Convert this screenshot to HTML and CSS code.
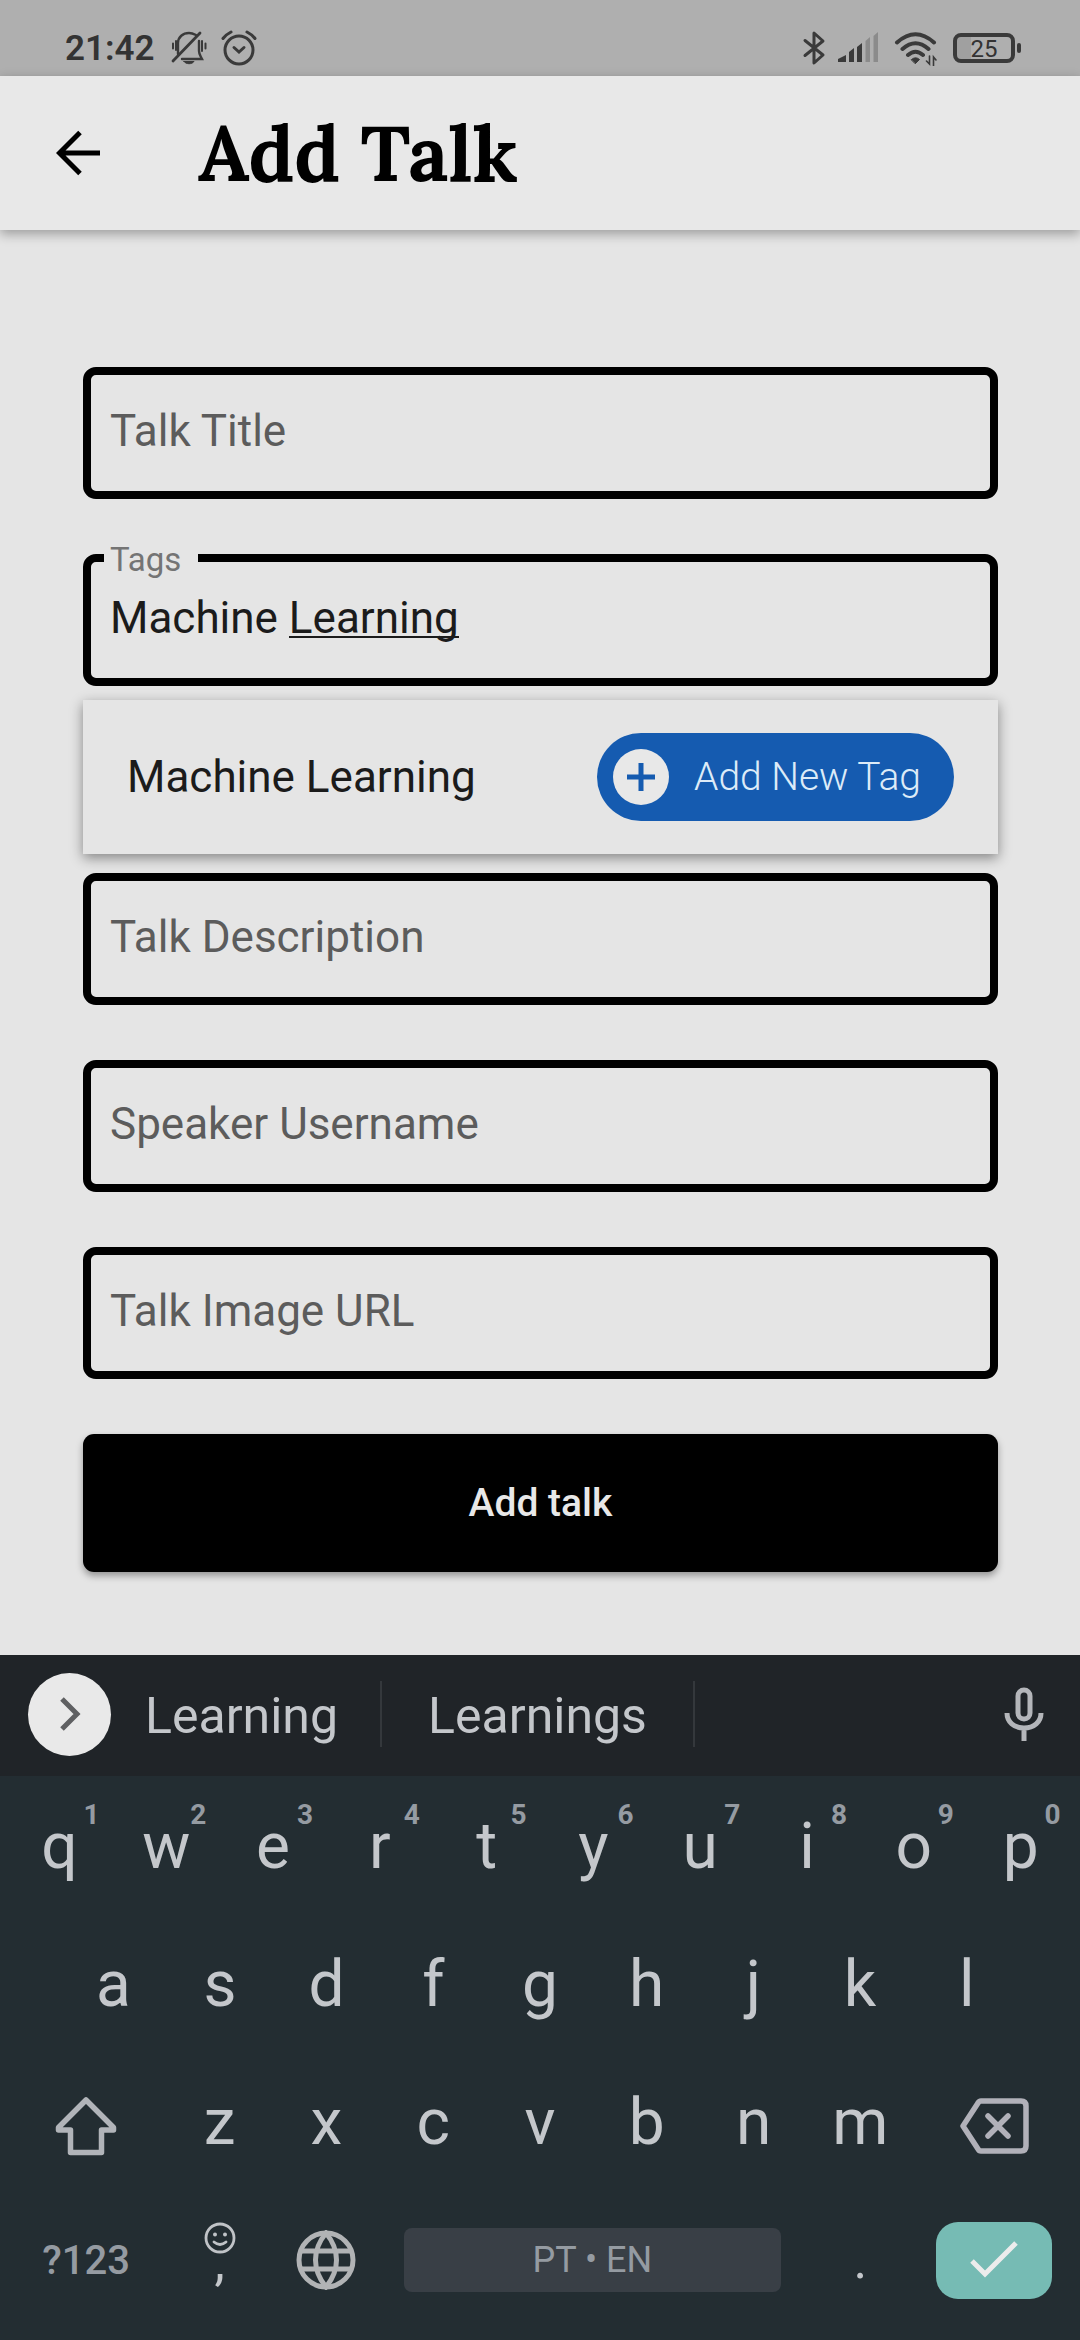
FILE: index.html
```html
<!DOCTYPE html>
<html lang="en">
<head>
<meta charset="utf-8">
<meta name="viewport" content="width=device-width, initial-scale=1">
<title>Add Talk</title>
<link rel="stylesheet" href="styles.css">
</head>
<body>
<div class="status">
  <div class="status-group status-left">
    <span class="clock">21:42</span>
    <svg class="icon" width="36" height="36" viewBox="0 0 36 36" fill="none" stroke="#3a3a3a" stroke-width="2.4" stroke-linecap="round">
      <path d="M7 24V13c0-6 5-10 11-10 3 0 5 1 7 2M28 11v10c0 3 1 4 3 8H11"/>
      <path d="M2 31L29 3" stroke-width="2.8"/>
      <path d="M13 31.500h10c-2 3-8 3-10 0z" fill="#3a3a3a" stroke-width="1"/>
      <path d="M2 13.500v5M5 11v9M31 11v10M34.500 13.500v5" stroke-width="2"/>
    </svg>
    <svg class="icon alarm" width="36" height="36" viewBox="0 0 36 36" fill="none" stroke="#3a3a3a" stroke-width="3" stroke-linecap="round">
      <circle cx="18" cy="20" r="14"/>
      <path d="M13 17.500l5 4.500 5-4.500"/>
      <path d="M2 8.500q3-4 8-6.500M26 2q5 2.500 8 6.500"/>
    </svg>
  </div>
  <div class="status-group status-right">
    <svg class="icon" width="24" height="36" viewBox="0 0 24 36" fill="none" stroke="#3a3a3a" stroke-width="3" stroke-linejoin="round" stroke-linecap="round">
      <path d="M3 10.500L21 25l-9 8V3l9 8L3 25.500"/>
    </svg>
    <svg class="icon signal" width="42" height="36" viewBox="0 0 42 36" fill="#3a3a3a">
      <path d="M1 32v-3l8-4v7zM12 32V22l5-4v14zM20 32V17l5-4v19z"/>
      <path d="M28.500 32V11l4.500-4v25zM36.500 32V6l4.500-4v30z" fill="#8b8b8b"/>
    </svg>
    <svg class="icon wifi" width="44" height="36" viewBox="0 0 44 36" fill="none" stroke="#3a3a3a" stroke-width="4" stroke-linecap="round">
      <path d="M3 12.500Q21.500-4 40 12.500M8.500 19Q21.500 7.500 34.500 19M14 25Q21.500 18.500 29 25"/>
      <path d="M17.500 29.500q4-3.500 8 0l-4 4z" fill="#3a3a3a" stroke-width="1"/>
      <path d="M35.500 26v8l-3-3M39.500 36v-9l2.500 3" stroke-width="1.600"/>
    </svg>
    <span class="battery"><span class="battery-body">25</span><span class="battery-nub"></span></span>
  </div>
</div>

<header class="appbar">
  <button class="back" type="button" aria-label="Back">
    <svg width="44" height="46" viewBox="0 0 44 46" fill="none" stroke="#000" stroke-width="5">
      <path d="M44 23H4M24 2.500L3.500 23 24 43.500"/>
    </svg>
  </button>
  <h1 class="title">Add Talk</h1>
</header>

<main class="content">
  <form class="form">
    <div class="field">
      <label class="field-label" for="talk-title">Talk Title</label>
      <input class="field-input" id="talk-title" type="text">
    </div>

    <div class="tag-group">
      <div class="field">
        <label class="field-label field-label-raised" for="tags">Tags</label>
        <input class="field-input" id="tags" type="text" value="Machine Learning">
        <span class="composing"></span>
      </div>
      <div class="menu">
        <span class="menu-text">Machine Learning</span>
        <button class="pill" type="button">
          <svg width="56" height="56" viewBox="0 0 56 56">
            <circle cx="28" cy="28" r="28" fill="#e8e8e8"/>
            <path d="M28 14v28M14 28h28" stroke="#155bb0" stroke-width="5"/>
          </svg>
          <span>Add New Tag</span>
        </button>
      </div>
      <div class="field">
        <label class="field-label" for="talk-description">Talk Description</label>
        <input class="field-input" id="talk-description" type="text">
      </div>
    </div>

    <div class="field">
      <label class="field-label" for="speaker">Speaker Username</label>
      <input class="field-input" id="speaker" type="text">
    </div>
    <div class="field">
      <label class="field-label" for="image-url">Talk Image URL</label>
      <input class="field-input" id="image-url" type="text">
    </div>
    <button class="submit" type="button">Add talk</button>
  </form>
</main>

<section class="keyboard">
  <div class="suggestions">
    <button class="expand" type="button" aria-label="More">
      <svg width="24" height="36" viewBox="0 0 24 36" fill="none" stroke="#5f6062" stroke-width="5"><path d="M4 3l15 15L4 33"/></svg>
    </button>
    <button class="suggestion" type="button">Learning</button>
    <button class="suggestion suggestion-wide" type="button">Learnings</button>
    <button class="mic" type="button" aria-label="Voice input">
      <svg width="40" height="54" viewBox="0 0 40 54" fill="none" stroke="#b4b6ba" stroke-width="5">
        <rect x="14" y="3" width="12" height="29" rx="6"/>
        <path d="M3 26c0 9 7 15 17 15s17-6 17-15M20 41v13"/>
      </svg>
    </button>
  </div>

  <div class="keys">
    <div class="row row-top">
      <button class="key" type="button">q<span class="hint">1</span></button>
      <button class="key" type="button">w<span class="hint">2</span></button>
      <button class="key" type="button">e<span class="hint">3</span></button>
      <button class="key" type="button">r<span class="hint">4</span></button>
      <button class="key" type="button">t<span class="hint">5</span></button>
      <button class="key" type="button">y<span class="hint">6</span></button>
      <button class="key" type="button">u<span class="hint">7</span></button>
      <button class="key" type="button">i<span class="hint">8</span></button>
      <button class="key" type="button">o<span class="hint">9</span></button>
      <button class="key" type="button">p<span class="hint">0</span></button>
    </div>
    <div class="row row-home">
      <button class="key" type="button">a</button>
      <button class="key" type="button">s</button>
      <button class="key" type="button">d</button>
      <button class="key" type="button">f</button>
      <button class="key" type="button">g</button>
      <button class="key" type="button">h</button>
      <button class="key" type="button">j</button>
      <button class="key" type="button">k</button>
      <button class="key" type="button">l</button>
    </div>
    <div class="row row-lower">
      <button class="key key-icon" type="button" aria-label="Shift">
        <svg width="62" height="60" viewBox="0 0 62 60" fill="none" stroke="#b1b4b9" stroke-width="5.500" stroke-linejoin="round">
          <path d="M31 4L3.500 31.500V34H15.500V56.500H46.500V34H58.500V31.500z"/>
        </svg>
      </button>
      <button class="key" type="button">z</button>
      <button class="key" type="button">x</button>
      <button class="key" type="button">c</button>
      <button class="key" type="button">v</button>
      <button class="key" type="button">b</button>
      <button class="key" type="button">n</button>
      <button class="key" type="button">m</button>
      <button class="key key-icon" type="button" aria-label="Backspace">
        <svg width="70" height="56" viewBox="0 0 70 56" fill="none" stroke="#b1b1b9" stroke-width="5.500" stroke-linecap="round" stroke-linejoin="round">
          <path d="M22 3H62q5 0 5 5V48q0 5-5 5H22q-2 0-3-2L4 28 19 5q1-2 3-2z"/>
          <path d="M29 18L49 38M49 18L29 38"/>
        </svg>
      </button>
    </div>
    <div class="row row-bottom">
      <button class="key key-symbols" type="button">?123</button>
      <button class="key key-comma" type="button">
        <svg width="32" height="32" viewBox="0 0 32 32" fill="none" stroke="#c0c3c7" stroke-width="2.800" stroke-linecap="round">
          <circle cx="16" cy="16" r="14"/>
          <path d="M10 20q6 5 12 0"/>
          <circle cx="11" cy="12.500" r="2" fill="#c0c3c7" stroke="none"/>
          <circle cx="21" cy="12.500" r="2" fill="#c0c3c7" stroke="none"/>
        </svg>
        <span class="comma">,</span>
      </button>
      <button class="key" type="button" aria-label="Language">
        <svg width="60" height="60" viewBox="0 0 60 60" fill="none" stroke="#b1b3b5" stroke-width="5">
          <circle cx="30" cy="30" r="27"/>
          <path d="M30 3C16 20 16 40 30 57C44 40 44 20 30 3zM5 21h50M5 39h50"/>
        </svg>
      </button>
      <button class="key key-space" type="button"><span class="space-bar">PT • EN</span></button>
      <button class="key key-period" type="button">.</button>
      <button class="key key-enter" type="button" aria-label="Done">
        <span class="enter-face">
          <svg width="50" height="40" viewBox="0 0 50 40" fill="none" stroke="#ececec" stroke-width="5"><path d="M3 21l13 13L47 3"/></svg>
        </span>
      </button>
    </div>
  </div>
</section>
</body>
</html>
```

FILE: styles.css
```css
* {
  box-sizing: border-box;
}

body {
  margin: 0;
  min-height: 100vh;
  display: flex;
  flex-direction: column;
  background: #e5e5e5;
  color: #1b1b1b;
  font-family: Roboto, "Liberation Sans", sans-serif;
  font-size: 44px;
}

button,
input {
  margin: 0;
  padding: 0;
  border: 0;
  background: none;
  color: inherit;
  font: inherit;
}

svg {
  display: block;
  flex: none;
}

/* Status bar */
.status {
  display: flex;
  justify-content: space-between;
  height: 76px;
  padding: 20px 59px 0 65px;
  background: #afafaf;
  color: #333;
}

.status-group {
  display: flex;
  align-items: center;
}

.clock {
  font-size: 35px;
  font-weight: 600;
  margin-right: 16px;
}

.alarm {
  margin-left: 14px;
}

.signal {
  margin-left: 11px;
}

.wifi {
  margin-left: 15px;
}

.battery {
  display: flex;
  align-items: center;
  gap: 2px;
  margin-left: 15px;
}

.battery-body {
  width: 62px;
  height: 30px;
  border: 4px solid #3a3a3a;
  border-radius: 8px;
  background: linear-gradient(90deg, #a0a0a0 14px, transparent 14px);
  font-size: 24px;
  line-height: 24px;
  text-align: center;
}

.battery-nub {
  width: 4px;
  height: 10px;
  border-radius: 2px;
  background: #3a3a3a;
}

/* App bar */
.appbar {
  display: flex;
  align-items: center;
  height: 154px;
  padding: 0 56px;
  background: #e8e8e8;
  box-shadow: 0 4px 11px rgba(0, 0, 0, 0.32);
}

.title {
  margin: 0 0 0 98px;
  font-family: Lora, "Liberation Serif", serif;
  font-size: 77px;
  font-weight: 700;
  line-height: 96px;
  color: #000;
}

/* Form */
.content {
  flex: 1;
  padding: 137px 82px 83px 83px;
}

.form {
  display: flex;
  flex-direction: column;
  gap: 55px;
}

.tag-group {
  display: flex;
  flex-direction: column;
}

.field {
  position: relative;
  display: grid;
  height: 132px;
  border: 8px solid #000;
  border-radius: 13px;
}

.field-label,
.field-input {
  grid-area: 1 / 1;
  min-width: 0;
  padding: 0 19px 4px;
}

.field-label {
  align-self: center;
  color: #5c5c5c;
}

.field-input {
  width: 100%;
  outline: none;
}

.field-label-raised {
  position: absolute;
  top: -22px;
  left: 13px;
  padding: 0 17px 0 6px;
  background: #e5e5e5;
  color: #747474;
  font-size: 33px;
  line-height: 40px;
}

.composing {
  position: absolute;
  top: 74px;
  left: 198px;
  width: 170px;
  height: 2px;
  background: #1b1b1b;
}

.menu {
  display: flex;
  align-items: center;
  justify-content: space-between;
  height: 154px;
  margin: 14px 0 19px;
  padding: 0 44px;
  background: #e5e5e5;
  box-shadow: 0 4px 12px rgba(0, 0, 0, 0.42);
}

.pill {
  display: flex;
  align-items: center;
  gap: 25px;
  height: 88px;
  padding: 0 33px 0 16px;
  border-radius: 44px;
  background: #155bb0;
  color: #dcebf8;
  font-size: 39px;
  font-weight: 300;
}

.submit {
  height: 138px;
  border-radius: 11px;
  background: #000;
  color: #e8e8e8;
  font-size: 39px;
  font-weight: 500;
  box-shadow: 0 4px 7px rgba(0, 0, 0, 0.35);
}

/* Keyboard */
.keyboard {
  padding-bottom: 11px;
  background: #232d32;
  color: #c4c7cb;
}

.suggestions {
  display: flex;
  align-items: center;
  height: 121px;
  padding: 0 36px 3px 28px;
  background: #202428;
}

.expand {
  display: grid;
  place-items: center;
  width: 83px;
  height: 83px;
  border-radius: 50%;
  background: #e9e9e9;
}

.suggestion {
  height: 66px;
  padding: 4px 42px 0 34px;
  border-right: 2px solid #34383c;
  font-size: 50px;
  line-height: 62px;
}

.suggestion-wide {
  padding: 4px 46px;
}

.mic {
  margin-left: auto;
}

.keys {
  display: grid;
  grid-auto-rows: 138px;
  padding-top: 1px;
}

.row {
  display: grid;
  padding: 0 6px;
}

.row-top {
  grid-template-columns: repeat(10, 1fr);
}

.row-home {
  grid-template-columns: repeat(9, 1fr);
  padding: 0 60px;
}

.row-lower {
  grid-template-columns: 3fr repeat(7, 2fr) 3fr;
}

.row-bottom {
  grid-template-columns: 3fr 2fr 2fr 8fr 2fr 3fr;
}

.key {
  position: relative;
  display: flex;
  align-items: center;
  justify-content: center;
  min-width: 0;
  font-size: 64px;
}

.hint {
  position: absolute;
  top: 24px;
  left: calc(50% + 24px);
  color: #959ba2;
  font-size: 28px;
  font-weight: 700;
  line-height: 28px;
}

.key-icon {
  padding-top: 8px;
}

.key-symbols {
  color: #959ba2;
  font-size: 40px;
  font-weight: 500;
}

.key-comma {
  flex-direction: column;
  padding-bottom: 26px;
}

.comma {
  font-size: 52px;
  line-height: 18px;
}

.key-period {
  font-size: 52px;
}

.space-bar {
  flex: 1;
  margin: 0 26px 0 24px;
  border-radius: 8px;
  background: #393f46;
  color: #959ba2;
  font-size: 36px;
  line-height: 64px;
}

.enter-face {
  display: grid;
  place-items: center;
  width: 116px;
  height: 77px;
  border-radius: 22px;
  background: #76bbb4;
}
```
